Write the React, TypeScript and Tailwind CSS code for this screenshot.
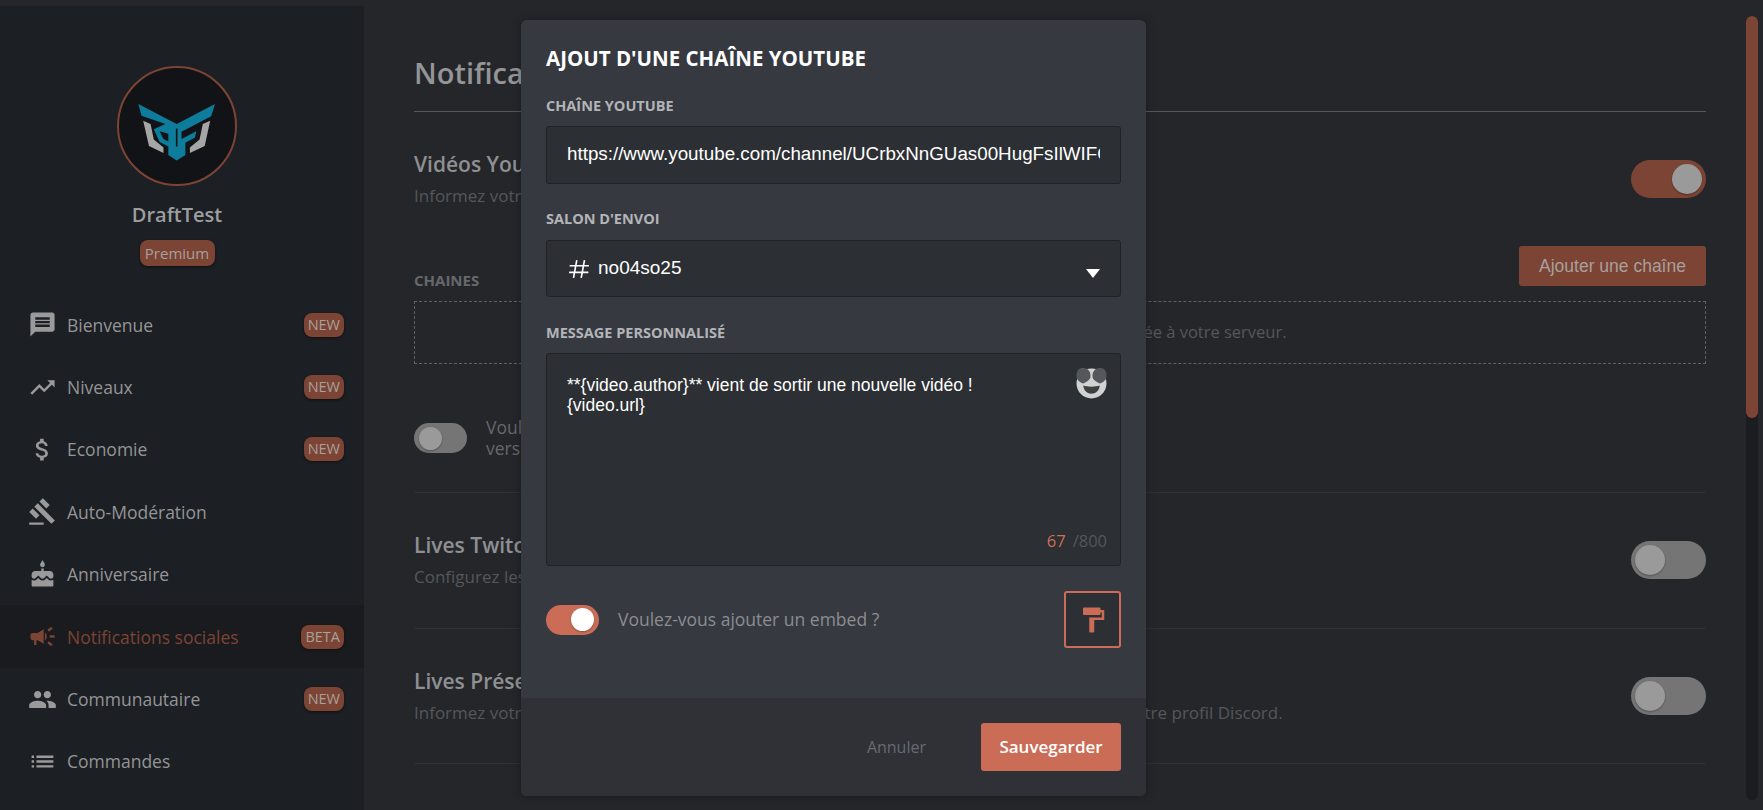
import type { ReactNode } from "react"
import {
  MdAttachMoney,
  MdCake,
  MdCampaign,
  MdFormatPaint,
  MdGavel,
  MdList,
  MdMessage,
  MdPeople,
  MdTrendingUp,
} from "react-icons/md"

const navItems = [
  { label: "Bienvenue", icon: <MdMessage size={29} />, badge: "NEW" },
  { label: "Niveaux", icon: <MdTrendingUp size={29} />, badge: "NEW" },
  { label: "Economie", icon: <MdAttachMoney size={29} />, badge: "NEW" },
  { label: "Auto-Modération", icon: <MdGavel size={29} /> },
  { label: "Anniversaire", icon: <MdCake size={29} /> },
  { label: "Notifications sociales", icon: <MdCampaign size={29} />, badge: "BETA", active: true },
  { label: "Communautaire", icon: <MdPeople size={29} />, badge: "NEW" },
  { label: "Commandes", icon: <MdList size={29} /> },
]

const Logo = () => (
  <svg viewBox="52 48 360 360" className="h-full w-full">
    <path
      fill="#0e7c9b"
      d="M112 160 L231 222 L350 160 L338 198 L246 246 L246 268 L292 244 L288 264 L258 280 L258 318 L231 335 L205 318 L205 252 L178 244 L190 268 L205 276 L205 292 L178 278 L160 238 L196 222 L122 196 Z"
    />
    <path stroke="#121316" strokeWidth="5" d="M231 236 V292" />
    <path fill="#a6a6a6" d="M127 212 L150 222 L160 270 L190 295 L190 312 L145 290 Z" />
    <path fill="#a6a6a6" d="M335 212 L312 222 L302 270 L272 295 L272 312 L318 290 Z" />
  </svg>
)

const Badge = ({ children, className = "" }: { children: ReactNode; className?: string }) => (
  <span className={`rounded-[8px] bg-[#7c4434] px-[4px] text-center text-[14.5px] leading-[24px] text-[#a8a09c] shadow-[0_1px_3px_rgba(0,0,0,0.5)] ${className}`}>
    {children}
  </span>
)

const Toggle = ({ on, small, modal }: { on?: boolean; small?: boolean; modal?: boolean }) => {
  const track = on ? (modal ? "bg-[#cb6d56]" : "bg-[#7c4434]") : "bg-[#757575]"
  const size = small ? "h-[30px] w-[53px] px-[5px] py-[3.5px]" : "h-[38px] w-[75px] px-[4px] py-[4px]"
  const knob = small ? "h-[23px] w-[23px]" : "h-[30px] w-[30px]"
  return (
    <div className={`flex shrink-0 rounded-full ${track} ${size} ${on ? "justify-end" : "justify-start"}`}>
      <div className={`rounded-full shadow-[0_1px_2px_rgba(0,0,0,0.3)] ${knob} ${modal ? "bg-white" : "bg-[#9a9a9a]"}`} />
    </div>
  )
}

const Sidebar = () => (
  <aside className="mt-[6px] flex w-[364px] shrink-0 flex-col bg-[#1c1f23]">
    <div className="flex flex-col items-center pt-[60px] pr-[10px]">
      <div className="h-[120px] w-[120px] rounded-full border-2 border-[#7c4434] bg-[#121316]">
        <Logo />
      </div>
      <div className="mt-[15px] text-[20px] leading-[28px] font-semibold text-[#9d9e9f]">DraftTest</div>
      <Badge className="mt-[11px] h-[26px] w-[75px] !px-0 !text-[15px] leading-[26px]">Premium</Badge>
    </div>
    <nav className="mt-[27.5px] flex flex-col">
      {navItems.map((item) => (
        <div
          key={item.label}
          className={`flex h-[62.4px] items-center pr-[20px] pl-[28px] text-[17.5px] ${
            item.active ? "bg-[#1a1b1e] text-[#7c4434]" : "text-[#949596]"
          }`}
        >
          <span className={item.active ? "text-[#7c4434]" : "text-[#9a9a9a]"}>{item.icon}</span>
          <span className="ml-[10px] flex-1">{item.label}</span>
          {item.badge && <Badge>{item.badge}</Badge>}
        </div>
      ))}
    </nav>
  </aside>
)

const Section = ({ title, text }: { title: string; text: string }) => (
  <section className="flex h-[135.5px] items-center justify-between border-b border-[#2e3034]">
    <div>
      <h3 className="text-[21px] leading-[28px] font-semibold text-[#8f9092]">{title}</h3>
      <p className="mt-[6px] text-[17px] leading-[24px] text-[#55575a]">{text}</p>
    </div>
    <Toggle />
  </section>
)

const Main = () => (
  <main className="min-w-0 flex-1 overflow-hidden pr-[40px] pl-[50px]">
    <h1 className="flex h-[112px] items-end border-b border-[#55565a] pb-[19px] text-[29px] leading-[38px] font-semibold text-[#949597]">
      Notifications sociales
    </h1>

    <section className="h-[381px] border-b border-[#2e3034]">
      <div className="flex items-start justify-between pt-[38px]">
        <div>
          <h3 className="text-[21px] leading-[28px] font-semibold text-[#8f9092]">Vidéos YouTube</h3>
          <p className="mt-[6px] text-[17px] leading-[24px] text-[#55575a]">
            Informez votre communauté lorsqu'une nouvelle vidéo est mise en ligne sur YouTube.
          </p>
        </div>
        <div className="mt-[10px]">
          <Toggle on />
        </div>
      </div>
      <div className="mt-[38px] flex items-end justify-between">
        <span className="relative top-[4px] text-[15px] leading-[20px] font-bold text-[#66686b]">CHAINES</span>
        <button className="h-[40px] w-[187px] rounded-[3px] bg-[#7c4434] font-['Liberation_Sans',Arial,sans-serif] text-[17.5px] text-[#a8a09c]">
          Ajouter une chaîne
        </button>
      </div>
      <div className="mt-[15px] flex h-[63px] items-center justify-center border border-dashed border-[#5f6063] text-[16.5px] text-[#55575a]">
        Aucune chaîne n'est actuellement associée à votre serveur.
      </div>
      <div className="mt-[53px] flex items-center gap-[19px]">
        <Toggle small />
        <p className="text-[17.5px] leading-[21px] text-[#66686b]">
          Voulez-vous ajouter les vidéos
          <br />
          vers ce salon ?
        </p>
      </div>
    </section>

    <Section title="Lives Twitch" text="Configurez les notifications pour vos lives Twitch." />
    <Section
      title="Lives Présence"
      text="Informez votre communauté lorsque vous lancez un live, selon le statut de live affiché sur votre profil Discord."
    />
  </main>
)

const Label = ({ children }: { children: ReactNode }) => (
  <label className="block text-[14.5px] leading-[20px] font-bold text-[#b2b4b7] uppercase">{children}</label>
)

const EmojiIcon = () => (
  <svg viewBox="0 0 30 30" className="h-[31px] w-[31px]">
    <circle cx="15" cy="15" r="14.5" fill="#d2d2d2" />
    <path fill="#55575a" d="M14 9 C14 11 9 14.5 7 15 C3 14 .5 11 .5 7 C.5 2.5 3 0 7 0 C11 0 14 3 14 7 Z" />
    <path fill="#55575a" d="M16 9 C16 11 21 14.5 23 15 C27 14 29.5 11 29.5 7 C29.5 2.5 27 0 23 0 C19 0 16 3 16 7 Z" />
    <path fill="#3f4044" d="M7 17 C11 18.5 19 18.5 23 17 C22.5 22 19 25 15 25 C11 25 7.500 22 7 17 Z" />
  </svg>
)

const Modal = () => (
  <div className="absolute top-[20px] left-[521px] flex h-[776px] w-[625px] flex-col overflow-hidden rounded-[6px] bg-[#363940] shadow-[0_0_10px_rgba(0,0,0,0.3)]">
    <div className="flex-1 px-[25px] pt-[24px]">
      <h2 className="text-[20.5px] leading-[28px] font-bold text-white uppercase">Ajout d'une chaîne YouTube</h2>

      <div className="mt-[24px]">
        <Label>Chaîne YouTube</Label>
      </div>
      <input
        readOnly
        value="https://www.youtube.com/channel/UCrbxNnGUas00HugFsIlWIFQ"
        className="mt-[10px] block h-[58px] w-full rounded-[3px] border border-[#202225] bg-[#2c2f33] px-[20px] pb-[2px] font-['Liberation_Sans',Arial,sans-serif] text-[18.8px] text-white outline-none"
      />

      <div className="mt-[25px]">
        <Label>Salon d'envoi</Label>
      </div>
      <div className="mt-[11px] flex h-[57px] items-center rounded-[3px] border border-[#202225] bg-[#2c2f33] pr-[20px] pl-[21px] font-['Liberation_Sans',Arial,sans-serif] text-[19px] text-white">
        <svg viewBox="0 0 20 20" className="h-[22px] w-[22px]" fill="none" stroke="white" strokeWidth="1.5">
          <path d="M8 2 L5 18 M15 2 L12 18 M1.500 7 L19 7 M1 13 L18.500 13" />
        </svg>
        <span className="ml-[8px] flex-1">no04so25</span>
        <svg viewBox="0 0 14 9" className="mt-[9px] h-[9px] w-[14px]">
          <path fill="white" d="M0 0 H14 L7 9 Z" />
        </svg>
      </div>

      <div className="mt-[26px]">
        <Label>Message personnalisé</Label>
      </div>
      <div className="relative mt-[10px] h-[213px] rounded-[3px] border border-[#202225] bg-[#2c2f33]">
        <textarea
          readOnly
          value={"**{video.author}** vient de sortir une nouvelle vidéo !\n{video.url}"}
          className="block h-full w-full resize-none bg-transparent px-[20px] pt-[21px] font-['Liberation_Sans',Arial,sans-serif] text-[17.5px] leading-[20px] text-white outline-none"
        />
        <div className="absolute top-[14px] right-[13px]">
          <EmojiIcon />
        </div>
        <div className="absolute right-[13px] bottom-[12px] text-[16.5px] leading-[24px]">
          <span className="text-[#cb6d56]">67</span>
          <span className="ml-[7px] text-[#55575b]">/800</span>
        </div>
      </div>

      <div className="mt-[25px] flex items-center">
        <Toggle on small modal />
        <span className="ml-[19px] flex-1 text-[17.5px] text-[#8b8d91]">Voulez-vous ajouter un embed ?</span>
        <button className="flex h-[57px] w-[57px] items-center justify-center rounded-[3px] border-2 border-[#cb6d56] bg-[#2c2f33] text-[#cb6d56]">
          <MdFormatPaint size={30} />
        </button>
      </div>
    </div>

    <div className="flex h-[98px] items-center justify-end bg-[#2f3136] px-[25px]">
      <button className="mr-[55px] text-[16px] text-[#676a70]">Annuler</button>
      <button className="h-[48px] w-[140px] rounded-[3px] bg-[#cb6d56] text-[17px] font-semibold text-white">
        Sauvegarder
      </button>
    </div>
  </div>
)

export default function App() {
  return (
    <div className="relative flex h-[810px] w-[1763px] overflow-hidden bg-[#24262a] font-['Open_Sans',sans-serif]">
      <Sidebar />
      <Main />
      <div className="mt-[16px] mr-[5px] mb-[10px] w-[12px] shrink-0 rounded-full bg-[#1b1c1e]">
        <div className="h-[402px] rounded-full bg-[#7c4434]" />
      </div>
      <Modal />
    </div>
  )
}
